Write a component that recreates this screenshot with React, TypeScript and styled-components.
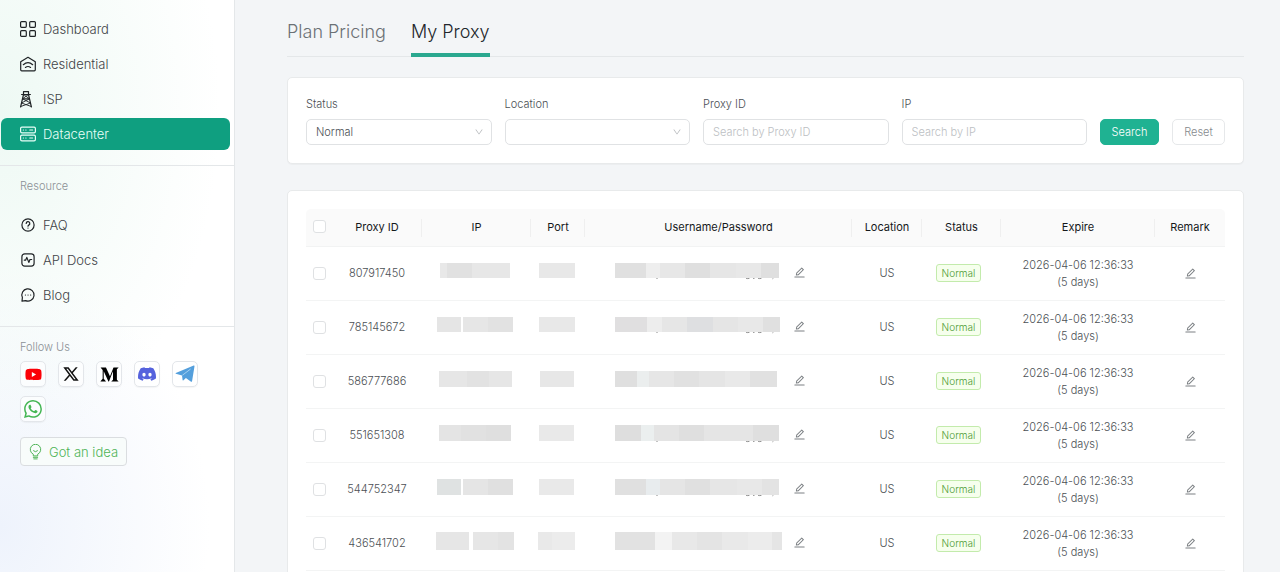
import React from "react";
import styled, { createGlobalStyle, css } from "styled-components";
import { AiOutlineEdit, AiOutlineDown } from "react-icons/ai";
import { FaYoutube, FaMediumM } from "react-icons/fa";
import { BsDiscord, BsWhatsapp } from "react-icons/bs";
import { RiTwitterXLine } from "react-icons/ri";

const GlobalStyle = createGlobalStyle`
  *, *::before, *::after { box-sizing: border-box; }
  body {
    margin: 0;
    background: #f3f5f7;
    color: #4b4f54;
    font-family: Inter, "Liberation Sans", sans-serif;
    font-size: 11px;
    font-weight: 300;
  }
  button, input, select { font: inherit; color: inherit; margin: 0; }
`;

/* ---------- layout ---------- */

const Layout = styled.div`
  display: flex;
  height: 100vh;
  overflow: hidden;
`;

const Sidebar = styled.aside`
  flex: 0 0 235px;
  border-right: 1px solid #e4e7e9;
  background:
    radial-gradient(ellipse 220px 340px at 0 110px, #eef9f4 0%, rgba(238, 249, 244, 0) 100%),
    radial-gradient(ellipse 210px 260px at 0 92%, #eef3fc 0%, rgba(238, 243, 252, 0) 100%),
    #ffffff;
  overflow: hidden;
`;

const Main = styled.main`
  flex: 1;
  min-width: 0;
  padding: 0 36px 0 52px;
  overflow-y: auto;
  scrollbar-width: none;
`;

/* ---------- sidebar ---------- */

const NavGroup = styled.nav<{ $top: number }>`
  display: flex;
  flex-direction: column;
  gap: 3px;
  padding: ${(p) => p.$top}px 4px 15px 1px;
`;

const NavItem = styled.a<{ $active?: boolean }>`
  display: flex;
  align-items: center;
  gap: 6px;
  height: 32px;
  padding-left: 18px;
  border-radius: 6px;
  color: #3f4347;
  font-size: 13px;
  text-decoration: none;
  svg { color: #1f2326; }
  ${(p) =>
    p.$active &&
    css`
      background: #0f9f80;
      color: #e9fff8;
      svg { color: #e9fff8; }
    `}
`;

const NavIcon = styled.svg.attrs({
  viewBox: "0 0 18 18",
  fill: "none",
  stroke: "currentColor",
  strokeLinecap: "round",
  strokeLinejoin: "round",
  "aria-hidden": true,
})`
  width: 18px;
  height: 18px;
  flex: none;
  stroke-width: 1.2;
`;

const Section = styled.section`
  border-top: 1px solid #e4e7e9;
`;

const SectionTitle = styled.h2`
  margin: 0;
  padding: 12px 20px 0;
  color: #8b9095;
  font-size: 11px;
  font-weight: 300;
  line-height: 16px;
`;

const Socials = styled.div`
  display: flex;
  flex-wrap: wrap;
  gap: 9px 12px;
  padding: 6px 20px 0;
`;

const SocialLink = styled.a<{ $color: string }>`
  display: flex;
  align-items: center;
  justify-content: center;
  width: 26px;
  height: 26px;
  border: 1px solid #e3e6ea;
  border-radius: 5px;
  background: rgba(255, 255, 255, 0.6);
  box-shadow: 0 1px 1px rgba(0, 0, 0, 0.04);
  color: ${(p) => p.$color};
`;

const IdeaButton = styled.button`
  display: flex;
  align-items: center;
  gap: 7px;
  height: 29px;
  margin: 15px 20px 0;
  padding: 0 8px;
  border: 1px solid #dadde0;
  border-radius: 4px;
  background: #f8fcfb;
  color: #4fb457;
  font-size: 13px;
  cursor: pointer;
`;

/* ---------- tabs ---------- */

const Tabs = styled.div`
  display: flex;
  gap: 25px;
  margin-bottom: 20px;
  border-bottom: 1px solid #e4e7e9;
`;

const Tab = styled.button<{ $active?: boolean }>`
  height: 57px;
  margin-bottom: -1px;
  padding: 10px 0 0;
  border: 0;
  border-bottom: 4px solid ${(p) => (p.$active ? "#2aa88f" : "transparent")};
  background: none;
  color: ${(p) => (p.$active ? "#22262b" : "#6b7075")};
  font-size: 18px;
  cursor: pointer;
`;

/* ---------- cards and filter form ---------- */

const Card = styled.section`
  margin-bottom: 26px;
  padding: 18px;
  border: 1px solid #e8eaeb;
  border-radius: 5px;
  background: #ffffff;
  box-shadow: 0 1px 1px rgba(0, 0, 0, 0.03);
`;

const Filters = styled.form`
  display: flex;
  align-items: flex-end;
  gap: 13px;
`;

const Field = styled.label`
  display: flex;
  flex: 1;
  flex-direction: column;
  gap: 7px;
  min-width: 0;
  line-height: 16px;
`;

const controlStyle = css`
  width: 100%;
  height: 26px;
  padding: 0 9px;
  border: 1px solid #e0e2e4;
  border-radius: 5px;
  background: #ffffff;
  outline: none;
`;

const TextInput = styled.input`
  ${controlStyle}
  &::placeholder { color: #bcc0c3; opacity: 1; }
`;

const SelectBox = styled.span`
  position: relative;
  display: block;
  svg {
    position: absolute;
    top: 8px;
    right: 8px;
    color: #b4b7ba;
    pointer-events: none;
  }
`;

const Select = styled.select`
  ${controlStyle}
  appearance: none;
  display: block;
`;

const Button = styled.button<{ $primary?: boolean }>`
  height: 26px;
  width: ${(p) => (p.$primary ? 59 : 53)}px;
  padding: 0;
  border: 1px solid ${(p) => (p.$primary ? "#1fb292" : "#e6e8ea")};
  border-radius: 5px;
  background: ${(p) => (p.$primary ? "#1fb292" : "#ffffff")};
  color: ${(p) => (p.$primary ? "#ffffff" : "#85898d")};
  cursor: pointer;
`;

/* ---------- table ---------- */

const Table = styled.table`
  width: 100%;
  table-layout: fixed;
  border-collapse: separate;
  border-spacing: 0;
  text-align: center;
`;

const HeadCell = styled.th<{ $divided?: boolean }>`
  height: 38px;
  padding: 0 0 2px;
  border-bottom: 1px solid #f2f3f3;
  background: ${(p) =>
    p.$divided
      ? "linear-gradient(#efefef, #efefef) right center / 1px 18px no-repeat #fafafa"
      : "#fafafa"};
  color: #15181b;
  font-weight: 400;
  &:first-child { border-top-left-radius: 5px; }
  &:last-child { border-top-right-radius: 5px; }
`;

const Cell = styled.td`
  height: 54px;
  padding: 0;
  border-bottom: 1px solid #f3f4f4;
  line-height: 17px;
`;

const Checkbox = styled.input.attrs({ type: "checkbox" })`
  appearance: none;
  display: block;
  width: 13px;
  height: 13px;
  margin: 0 auto 1px;
  border: 1px solid #dfe1e3;
  border-radius: 3px;
  background: #ffffff;
`;

const Tag = styled.span`
  display: inline-block;
  margin: 0 6px 2px 0;
  padding: 0 5px;
  border: 1px solid #c3ebac;
  border-radius: 3px;
  background: #f6ffed;
  color: #4f9c35;
  font-size: 10px;
  line-height: 16px;
  vertical-align: middle;
`;

const EditButton = styled.button`
  display: inline-flex;
  margin-bottom: 2px;
  padding: 0;
  border: 0;
  background: none;
  color: #7c8084;
  vertical-align: middle;
  cursor: pointer;
`;

const Credentials = styled.div`
  display: flex;
  align-items: center;
  justify-content: center;
  gap: 4px;
  padding-right: 16px;
`;

const CredentialSlot = styled.div`
  width: 174px;
`;

const MaskWrap = styled.div<{ $start?: boolean }>`
  display: flex;
  flex-direction: column;
  align-items: ${(p) => (p.$start ? "flex-start" : "center")};
  padding: 0 ${(p) => (p.$start ? 0 : 3)}px 4px 0;
`;

const Mask = styled.div<{ $height: number }>`
  display: flex;
  height: ${(p) => p.$height}px;
`;

const MaskBlock = styled.span<{ $width: number; $shade: string }>`
  width: ${(p) => p.$width}px;
  background: ${(p) => p.$shade};
`;

/* ---------- data ---------- */

type Block = [number, string];

interface Proxy {
  id: string;
  ip: Block[];
  port: Block[];
  login: Block[];
  traces?: boolean;
  height: number;
}

const gap: string = "transparent";

const proxies: Proxy[] = [
  {
    id: "807917450",
    height: 15,
    ip: [[7, "#e8e8e8"], [25, "#e1e1e1"], [38, "#e7e7e7"]],
    port: [[36, "#e8e8e8"]],
    login: [[31, "#e0e0e0"], [14, "#eeeeee"], [25, "#e7e7e7"], [25, "#dfdfdf"], [26, "#e6e6e6"], [25, "#e8e8e8"], [18, "#dfdfdf"]],
    traces: true,
  },
  {
    id: "785145672",
    height: 15,
    ip: [[24, "#e5e5e5"], [2, gap], [25, "#e6e6e6"], [25, "#e2e2e2"]],
    port: [[36, "#e8e8e8"]],
    login: [[32, "#e0dfe0"], [15, "#ededed"], [25, "#e6e6e6"], [26, "#dedfe1"], [25, "#e5e5e5"], [25, "#e8e8e8"], [17, "#e0e0e0"]],
    traces: true,
  },
  {
    id: "586777686",
    height: 16,
    ip: [[28, "#e6e6e6"], [22, "#e2e2e2"], [23, "#e6e6e6"]],
    port: [[34, "#e7e7e7"]],
    login: [[22, "#dfdfdf"], [12, "#ebeeee"], [25, "#e6e6e6"], [25, "#e1e1e1"], [26, "#e5e5e5"], [25, "#e9e9e9"], [27, "#e1e1e1"]],
  },
  {
    id: "551651308",
    height: 16,
    ip: [[22, "#e4e4e4"], [25, "#e1e1e1"], [25, "#dfdfdf"]],
    port: [[35, "#e9e9e9"]],
    login: [[26, "#dedede"], [13, "#ebefef"], [25, "#e4e4e4"], [25, "#dfdfdf"], [49, "#e5e5e5"], [26, "#dfdfdf"]],
    traces: true,
  },
  {
    id: "544752347",
    height: 16,
    ip: [[24, "#dfe2e2"], [2, gap], [25, "#e5e5e5"], [25, "#e0e0e0"]],
    port: [[35, "#e9e9e9"]],
    login: [[31, "#e0e0e0"], [14, "#e8ecee"], [25, "#e5e5e5"], [25, "#e0e0e0"], [27, "#e6e6e6"], [25, "#e8e8e8"], [17, "#e3e3e3"]],
    traces: true,
  },
  {
    id: "436541702",
    height: 18,
    ip: [[33, "#e6e6e6"], [4, gap], [25, "#e6e6e6"], [16, "#e3e3e3"]],
    port: [[14, "#e9e9e9"], [23, "#ececec"]],
    login: [[40, "#e2e2e2"], [17, "#f3f3f3"], [25, "#e8e8e8"], [25, "#e4e4e4"], [26, "#e9e9e9"], [24, "#ececec"], [10, "#e5e5e5"]],
  },
];

const columns = [
  { title: "Proxy ID", width: 90 },
  { title: "IP", width: 109 },
  { title: "Port", width: 54 },
  { title: "Username/Password", width: 267 },
  { title: "Location", width: 70 },
  { title: "Status", width: 79 },
  { title: "Expire", width: 154 },
  { title: "Remark", width: 70 },
];

/* ---------- parts ---------- */

function Redacted({ blocks, height, traces, start }: { blocks: Block[]; height: number; traces?: boolean; start?: boolean }) {
  return (
    <MaskWrap $start={start}>
      <Mask $height={height}>
        {blocks.map(([width, shade], i) => (
          <MaskBlock key={i} $width={width} $shade={shade} />
        ))}
      </Mask>
      <svg width={start ? 165 : 1} height="2" aria-hidden="true">
        {traces && (
          <path d="M42.5 0l-1 1M131 .2q1.5 .8 3.500 0M138 .3h1.500M143 .2q1.500 .8 3.500 0M158.500 0l-1 .8" stroke="#888" strokeWidth="1" fill="none" />
        )}
      </svg>
    </MaskWrap>
  );
}

function DashboardIcon() {
  return (
    <NavIcon>
      <rect x="1.6" y="1.6" width="5.7" height="5.7" rx="1" />
      <rect x="10.7" y="1.6" width="5.7" height="5.7" rx="1" />
      <rect x="1.6" y="10.7" width="5.7" height="5.7" rx="1" />
      <rect x="10.7" y="10.7" width="5.7" height="5.7" rx="1" />
    </NavIcon>
  );
}

function ResidentialIcon() {
  return (
    <NavIcon>
      <path d="M1.7 6.7 9 2.3l7.3 4.4v8.100a1 1 0 0 1-1 1H2.700a1 1 0 0 1-1-1z" />
      <path d="M4.3 9.7c2.800-2.400 6.600-2.400 9.400 0M6.400 12.400c1.600-1.100 3.600-1.100 5.200 0" />
    </NavIcon>
  );
}

function IspIcon() {
  return (
    <NavIcon>
      <path d="M4.500 1.700h5v2.800h-5zM2.600 4.500h8.800M4.500 4.500 1.600 17M9.500 4.500 12.400 17M3.500 8.800h7" />
      <g strokeWidth=".9">
        <path d="M4.500 4.500 10.500 8.800M9.500 4.500 3.500 8.800M3.500 8.800l8 4.200M10.500 8.800l-8 4.200M2.500 13l9.500 3.400M11.500 13l-9.500 3.400" />
      </g>
    </NavIcon>
  );
}

function DatacenterIcon() {
  return (
    <NavIcon>
      <rect x="1.6" y="2.2" width="14.8" height="5.6" rx="1.3" />
      <rect x="1.6" y="10.2" width="14.8" height="5.6" rx="1.3" />
      <path d="M4.300 5h.2M6.800 5h.2M10.800 5h2.800M4.300 13h.2M6.800 13h.2M10.800 13h2.800" />
    </NavIcon>
  );
}

function FaqIcon() {
  return (
    <NavIcon>
      <circle cx="9" cy="9" r="6.1" />
      <path d="M7.200 7.500a1.800 1.800 0 1 1 2.600 1.600c-.6.300-.8.600-.8 1.100M9 12v.1" />
    </NavIcon>
  );
}

function ApiIcon() {
  return (
    <NavIcon>
      <rect x="2.9" y="2.9" width="12.2" height="12.2" rx="2.8" />
      <path d="M5.300 9.200h1.300l1.200-2.800 2 5 1.200-2.900h1.700" />
    </NavIcon>
  );
}

function BlogIcon() {
  return (
    <NavIcon>
      <path d="M3 15.100l.4-3.600A6.100 6.100 0 1 1 6.600 14.600z" />
      <path d="M6.400 9h.1M9 9h.1M11.600 9h.1" />
    </NavIcon>
  );
}

function TelegramIcon() {
  return (
    <svg width="20" height="20" viewBox="0 0 20 20" aria-hidden="true">
      <path d="M.8 8.900 18.700 1.600q.9-.3.800.7L17.100 16.900q-.3 1.300-1.400.6L10.900 14l-2.700 2.400q-.5.400-.6-.3L7 11.400.9 9.700q-.7-.4-.1-.8z" fill="currentColor" />
      <path d="M7.300 11.300 15.600 5" fill="none" stroke="#b9dcf5" strokeWidth=".8" strokeLinejoin="round" />
    </svg>
  );
}

function BulbIcon() {
  return (
    <svg width="13" height="16" viewBox="0 0 13 16" fill="none" stroke="currentColor" strokeWidth="1" strokeLinecap="round" strokeLinejoin="round" aria-hidden="true">
      <path d="M4.300 11.500V10.200A5.200 5.200 0 1 1 8.700 10.200v1.300z" />
      <path d="M4.500 6.800q2 2 4 0M4.300 13.300h4.400M4.800 14.900h3.400" />
    </svg>
  );
}

function SelectField({ label, options }: { label: string; options: string[] }) {
  return (
    <Field>
      {label}
      <SelectBox>
        <Select>
          {options.map((o) => (
            <option key={o}>{o}</option>
          ))}
        </Select>
        <AiOutlineDown size={10} />
      </SelectBox>
    </Field>
  );
}

function ProxyRow({ proxy }: { proxy: Proxy }) {
  return (
    <tr>
      <Cell><Checkbox aria-label={`Select ${proxy.id}`} /></Cell>
      <Cell>{proxy.id}</Cell>
      <Cell><Redacted blocks={proxy.ip} height={proxy.height} /></Cell>
      <Cell><Redacted blocks={proxy.port} height={proxy.height} /></Cell>
      <Cell>
        <Credentials>
          <CredentialSlot>
            <Redacted blocks={proxy.login} height={proxy.height} traces={proxy.traces} start />
          </CredentialSlot>
          <EditButton type="button" aria-label="Edit credentials"><AiOutlineEdit size={13} /></EditButton>
        </Credentials>
      </Cell>
      <Cell>US</Cell>
      <Cell><Tag>Normal</Tag></Cell>
      <Cell>2026-04-06 12:36:33<br />(5 days)</Cell>
      <Cell><EditButton type="button" aria-label="Edit remark"><AiOutlineEdit size={13} /></EditButton></Cell>
    </tr>
  );
}

export default function App() {
  return (
    <>
      <GlobalStyle />
      <Layout>
        <Sidebar>
          <NavGroup $top={13}>
            <NavItem href="#dashboard"><DashboardIcon />Dashboard</NavItem>
            <NavItem href="#residential"><ResidentialIcon />Residential</NavItem>
            <NavItem href="#isp"><IspIcon />ISP</NavItem>
            <NavItem href="#datacenter" $active><DatacenterIcon />Datacenter</NavItem>
          </NavGroup>
          <Section>
            <SectionTitle>Resource</SectionTitle>
            <NavGroup $top={15}>
              <NavItem href="#faq"><FaqIcon />FAQ</NavItem>
              <NavItem href="#api"><ApiIcon />API Docs</NavItem>
              <NavItem href="#blog"><BlogIcon />Blog</NavItem>
            </NavGroup>
          </Section>
          <Section>
            <SectionTitle>Follow Us</SectionTitle>
            <Socials>
              <SocialLink href="#youtube" aria-label="YouTube" $color="#fb0007"><FaYoutube size={17} /></SocialLink>
              <SocialLink href="#x" aria-label="X" $color="#111111"><RiTwitterXLine size={18} /></SocialLink>
              <SocialLink href="#medium" aria-label="Medium" $color="#000000"><FaMediumM size={19} /></SocialLink>
              <SocialLink href="#discord" aria-label="Discord" $color="#5562dd"><BsDiscord size={18} /></SocialLink>
              <SocialLink href="#telegram" aria-label="Telegram" $color="#549fdc"><TelegramIcon /></SocialLink>
              <SocialLink href="#whatsapp" aria-label="WhatsApp" $color="#45b654"><BsWhatsapp size={18} /></SocialLink>
            </Socials>
            <IdeaButton type="button"><BulbIcon />Got an idea</IdeaButton>
          </Section>
        </Sidebar>
        <Main>
          <Tabs role="tablist">
            <Tab type="button" role="tab">Plan Pricing</Tab>
            <Tab type="button" role="tab" aria-selected="true" $active>My Proxy</Tab>
          </Tabs>
          <Card>
            <Filters>
              <SelectField label="Status" options={["Normal"]} />
              <SelectField label="Location" options={[""]} />
              <Field>Proxy ID<TextInput placeholder="Search by Proxy ID" /></Field>
              <Field>IP<TextInput placeholder="Search by IP" /></Field>
              <Button type="button" $primary>Search</Button>
              <Button type="reset">Reset</Button>
            </Filters>
          </Card>
          <Card>
            <Table>
              <colgroup>
                <col width={26} />
                {columns.map((c) => (
                  <col key={c.title} width={c.width} />
                ))}
              </colgroup>
              <thead>
                <tr>
                  <HeadCell><Checkbox aria-label="Select all" /></HeadCell>
                  {columns.map((c, i) => (
                    <HeadCell key={c.title} scope="col" $divided={i < columns.length - 1}>{c.title}</HeadCell>
                  ))}
                </tr>
              </thead>
              <tbody>
                {proxies.map((p) => (
                  <ProxyRow key={p.id} proxy={p} />
                ))}
              </tbody>
            </Table>
          </Card>
        </Main>
      </Layout>
    </>
  );
}
